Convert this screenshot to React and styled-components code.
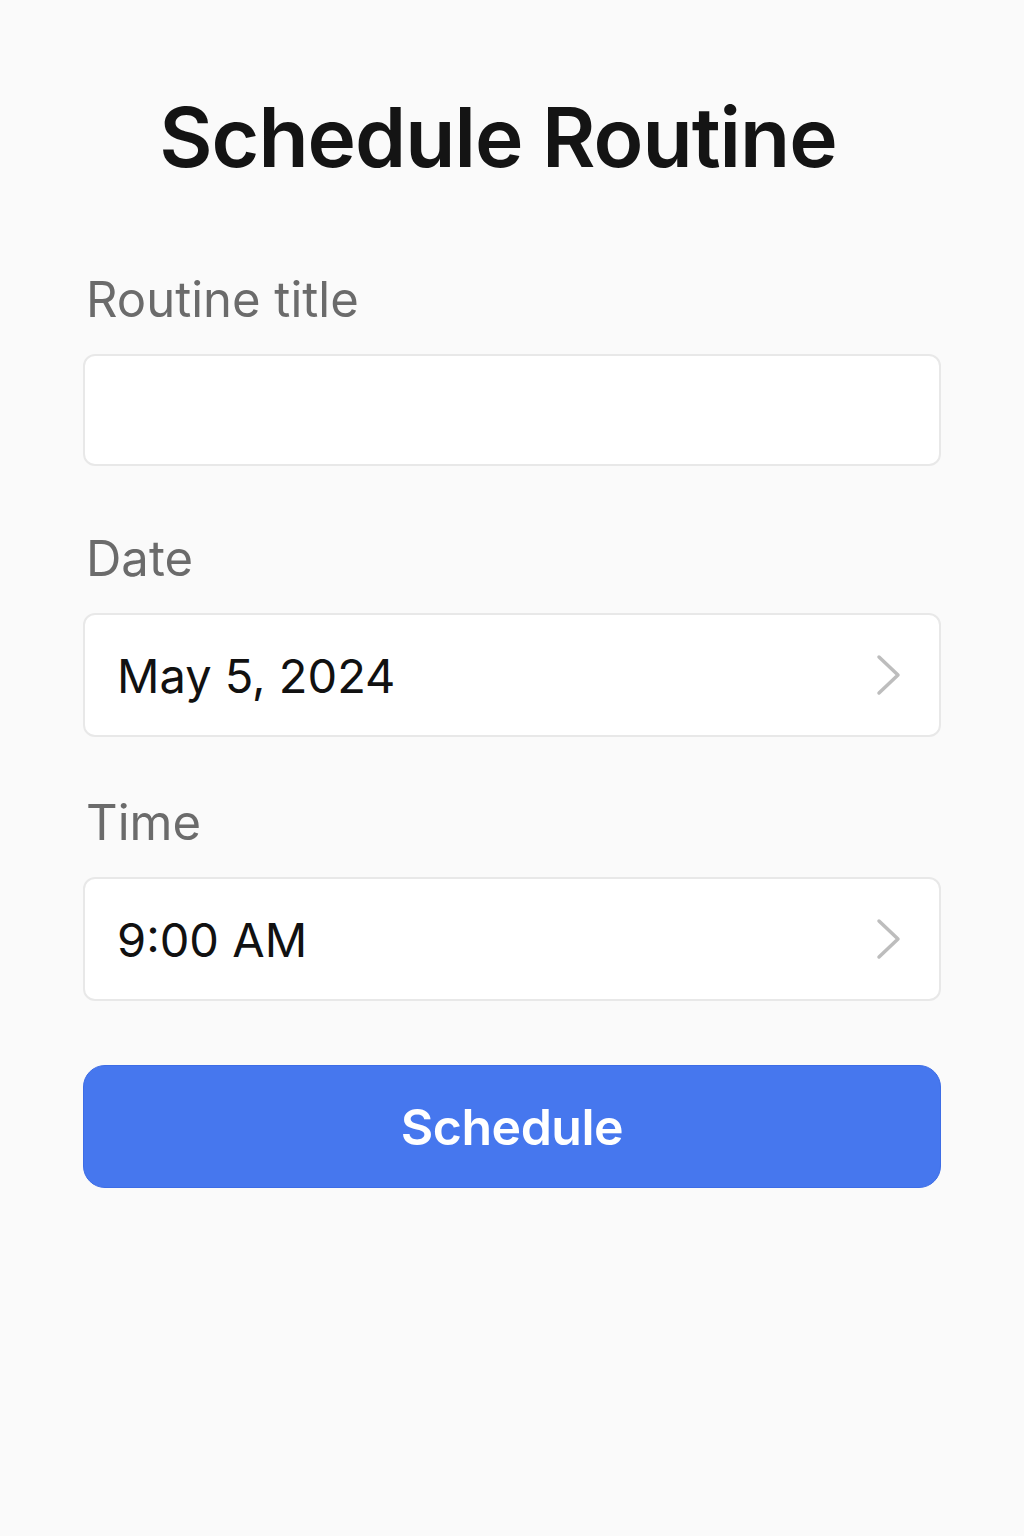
import React from 'react';
import styled, { createGlobalStyle } from 'styled-components';

const GlobalStyle = createGlobalStyle`
  html, body {
    margin: 0;
    padding: 0;
    background: #fafafa;
  }
  body {
    font-family: Inter, "Noto Sans", sans-serif;
  }
`;

const Page = styled.div`
  width: 1024px;
  min-height: 1536px;
  box-sizing: border-box;
  padding: 88px 83px 0;
  background: #fafafa;
`;

const Title = styled.h1`
  margin: 0 0 82px;
  padding-right: 28px;
  text-align: center;
  font-size: 82px;
  font-weight: 600;
  letter-spacing: -1px;
  line-height: 100px;
  color: #141414;
`;

const Field = styled.div`
  display: flex;
  flex-direction: column;
  margin-bottom: ${p => p.gap || 64}px;
`;

const Label = styled.label`
  padding-left: 3px;
  margin-bottom: 24px;
  font-size: 49px;
  line-height: 60px;
  font-weight: 400;
  color: #6b6b6b;
`;

const Box = styled.div`
  display: flex;
  align-items: center;
  justify-content: space-between;
  height: ${p => p.h}px;
  box-sizing: border-box;
  padding: 0 36px 0 32px;
  background: #ffffff;
  border: 2px solid #e8e8e8;
  border-radius: 12px;
`;

const Value = styled.span`
  font-size: 47px;
  font-weight: 400;
  color: #111111;
`;

const Button = styled.button`
  width: 100%;
  height: 123px;
  border: 1px solid #3d6de6;
  border-radius: 22px;
  background: #4677ee;
  color: #ffffff;
  font-family: Inter, "Noto Sans", sans-serif;
  font-size: 50px;
  font-weight: 600;
  letter-spacing: -0.5px;
  cursor: pointer;
`;

const Chevron = () => (
  <svg width="28" height="44" viewBox="0 0 28 44" fill="none">
    <path d="M4 4 L23 22 L4 40" stroke="#bdbdbd" strokeWidth="3.5" strokeLinecap="round" strokeLinejoin="round" />
  </svg>
);

export default function App() {
  return (
    <Page>
      <GlobalStyle />
      <Title>Schedule Routine</Title>
      <Field gap={63}>
        <Label>Routine title</Label>
        <Box h={112} />
      </Field>
      <Field gap={56}>
        <Label>Date</Label>
        <Box h={124}>
          <Value>May 5, 2024</Value>
          <Chevron />
        </Box>
      </Field>
      <Field gap={64}>
        <Label>Time</Label>
        <Box h={124}>
          <Value>9:00 AM</Value>
          <Chevron />
        </Box>
      </Field>
      <Button>Schedule</Button>
    </Page>
  );
}
